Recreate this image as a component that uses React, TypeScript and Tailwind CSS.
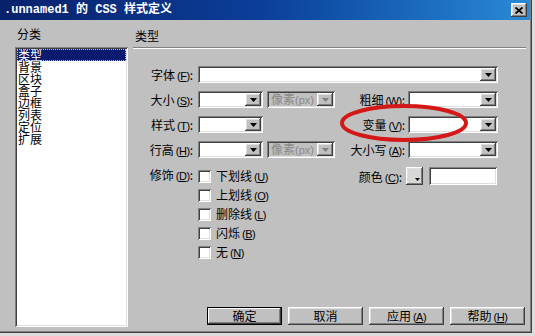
import React from "react";

const FONT = { fontFamily: '"Noto Sans CJK SC", "Liberation Sans", sans-serif' };

const sunken =
  "shadow-[inset_1px_1px_0_#808080,inset_-1px_-1px_0_#ffffff,inset_2px_2px_0_#404040,inset_-2px_-2px_0_#dfdfdf]";
const raised =
  "shadow-[inset_-1px_-1px_0_#404040,inset_1px_1px_0_#ffffff,inset_-2px_-2px_0_#808080,inset_2px_2px_0_#dfdfdf]";

function Key({ k }: { k: string }) {
  return (
    <span className="text-[11px] tracking-[-0.5px]" style={{ fontFamily: '"Liberation Sans", sans-serif' }}>
      (<span className="underline">{k}</span>)
    </span>
  );
}

function Label({ text, k, className }: { text: string; k: string; className: string }) {
  return (
    <div className={`text-[12px] leading-[17px] text-black text-right whitespace-nowrap ${className}`}>
      {text}
      <span className="ml-[2px]">
        <Key k={k} />
      </span>
      :
    </div>
  );
}

function Arrow({ disabled }: { disabled?: boolean }) {
  return (
    <div className={`w-[16px] h-[13px] bg-[#c0c0c0] ${raised} flex items-center justify-center`}>
      <svg width="7" height="4" viewBox="0 0 7 4">
        <polygon points="0,0 7,0 3.5,4" fill={disabled ? "#808080" : "#000"} />
      </svg>
    </div>
  );
}

function Select({ w, disabled, text }: { w: string; disabled?: boolean; text?: string }) {
  return (
    <div
      className={`${w} h-[17px] ${disabled ? "bg-[#c0c0c0]" : "bg-white"} ${sunken} flex items-center justify-between pl-[4px] pr-[2px]`}
    >
      <span className="text-[12px] leading-[13px] text-[#8a8a8a] whitespace-nowrap">
        {text}
        {text && (
          <span className="text-[11px]" style={{ fontFamily: '"Liberation Sans", sans-serif' }}>
            (px)
          </span>
        )}
      </span>
      <Arrow disabled={disabled} />
    </div>
  );
}

function Checkbox({ text, k }: { text: string; k: string }) {
  return (
    <div className="h-[19px] flex items-start">
      <div className={`w-[13px] h-[13px] bg-white ${sunken}`} />
      <div className="ml-[5px] text-[12px] leading-[14px] -mt-[1px] whitespace-nowrap">
        {text}
        <span className="ml-[2px]">
          <Key k={k} />
        </span>
      </div>
    </div>
  );
}

function Button({ text, k, def }: { text: string; k?: string; def?: boolean }) {
  return (
    <div
      className={`w-[75px] h-[18px] bg-[#c0c0c0] ${
        def
          ? "shadow-[inset_0_0_0_1px_#000,inset_-2px_-2px_0_#404040,inset_2px_2px_0_#ffffff,inset_-3px_-3px_0_#808080]"
          : raised
      } flex items-center justify-center text-[12px] leading-[14px]`}
    >
      {text}
      {k && (
        <span className="ml-[2px]">
          <Key k={k} />
        </span>
      )}
    </div>
  );
}

export default function App() {
  const items = ["类型", "背景", "区块", "盒子", "边框", "列表", "定位", "扩展"];
  return (
    <div className="w-[535px] h-[336px] bg-[#dcdcdc] overflow-hidden" style={FONT}>
      <div className="relative w-[532px] h-[333px] bg-[#c0c0c0] shadow-[inset_-1px_-1px_0_#404040,inset_-2px_-2px_0_#808080] flex flex-col">
        {/* Title bar */}
        <div className="h-[20px] w-[530px] bg-gradient-to-r from-[#08216b] via-[#0c3f9a] to-[#2a8ad6] flex items-center justify-between pl-[4px] pr-[3px]">
          <div
            className="text-white font-bold text-[12px] leading-[14px] whitespace-nowrap"
            style={{ fontFamily: '"Liberation Mono", "Noto Sans CJK SC", monospace' }}
          >
            .unnamed1 的 CSS 样式定义
          </div>
          <div className={`w-[16px] h-[14px] bg-[#c0c0c0] ${raised} flex items-center justify-center`}>
            <svg width="8" height="7" viewBox="0 0 8 7">
              <path d="M0.5 0.5 L7.5 6.5 M7.5 0.5 L0.5 6.5" stroke="#000" strokeWidth="1.8" />
            </svg>
          </div>
        </div>

        {/* Body */}
        <div className="flex h-[313px]">
          {/* Left column */}
          <div className="ml-[15px] w-[113px] flex flex-col">
            <div className="h-[27px] pt-[8px] pl-[2px] text-[12px] leading-[12px] text-black">分类</div>
            <div className={`h-[280px] bg-white ${sunken} pt-[2px] px-[2px]`}>
              {items.map((it, i) => (
                <div
                  key={it}
                  className={`h-[12px] text-[12px] leading-[12px] pl-[1px] ${
                    i === 0 ? "bg-[#0a1a6e] text-white outline-1 outline-dotted outline-[#c0c0c0] -outline-offset-1" : "text-black"
                  }`}
                >
                  {it}
                </div>
              ))}
            </div>
          </div>

          {/* Right column */}
          <div className="ml-[5px] w-[393px] flex flex-col">
            <div className="h-[27px] pt-[10px] pl-[2px] text-[12px] leading-[12px] text-black">类型</div>
            <div className="h-[2px] border-t border-[#808080] border-b border-b-white" />

            <div className="mt-[17px] flex flex-col gap-[8px]">
              <div className="flex h-[17px]">
                <Label text="字体" k="F" className="w-[65px] pr-[5px]" />
                <Select w="w-[300px]" />
              </div>
              <div className="flex h-[17px]">
                <Label text="大小" k="S" className="w-[65px] pr-[5px]" />
                <Select w="w-[65px]" />
                <div className="ml-[4px]">
                  <Select w="w-[68px]" disabled text="像素" />
                </div>
                <Label text="粗细" k="W" className="w-[73px] pr-[3px]" />
                <Select w="w-[90px]" />
              </div>
              <div className="flex h-[17px]">
                <Label text="样式" k="T" className="w-[65px] pr-[5px]" />
                <Select w="w-[65px]" />
                <div className="w-[72px]" />
                <Label text="变量" k="V" className="w-[73px] pr-[3px]" />
                <Select w="w-[90px]" />
              </div>
              <div className="flex h-[17px]">
                <Label text="行高" k="H" className="w-[65px] pr-[5px]" />
                <Select w="w-[65px]" />
                <div className="ml-[4px]">
                  <Select w="w-[68px]" disabled text="像素" />
                </div>
                <Label text="大小写" k="A" className="w-[73px] pr-[3px]" />
                <Select w="w-[90px]" />
              </div>
            </div>

            <div className="mt-[9px] flex">
              <div className="w-[202px] flex">
                <Label text="修饰" k="D" className="w-[65px] pr-[5px] -mt-[1px]" />
                <div className="pt-[3px] flex flex-col">
                  <Checkbox text="下划线" k="U" />
                  <Checkbox text="上划线" k="O" />
                  <Checkbox text="删除线" k="L" />
                  <Checkbox text="闪烁" k="B" />
                  <Checkbox text="无" k="N" />
                </div>
              </div>
              <div className="flex items-start">
                <Label text="颜色" k="C" className="w-[71px] pr-[4px] pt-[1px]" />
                <div className={`w-[17px] h-[18px] bg-[#d8d8d8] ${raised} relative`}>
                  <svg className="absolute right-[3px] bottom-[4px]" width="5" height="3" viewBox="0 0 5 3">
                    <polygon points="0,0 5,0 2.5,3" fill="#000" />
                  </svg>
                </div>
                <div className={`ml-[6px] w-[68px] h-[18px] bg-white ${sunken}`} />
              </div>
            </div>

            <div className="mt-auto mb-[8px] pl-[74px] flex gap-[6px]">
              <Button text="确定" def />
              <Button text="取消" />
              <Button text="应用" k="A" />
              <Button text="帮助" k="H" />
            </div>
          </div>
        </div>

        {/* Red annotation ellipse */}
        <svg className="absolute left-[338px] top-[103px]" width="134" height="42" viewBox="0 0 134 42">
          <ellipse cx="66" cy="20" rx="62" ry="17" fill="none" stroke="#d41818" strokeWidth="4" />
        </svg>
      </div>
    </div>
  );
}
